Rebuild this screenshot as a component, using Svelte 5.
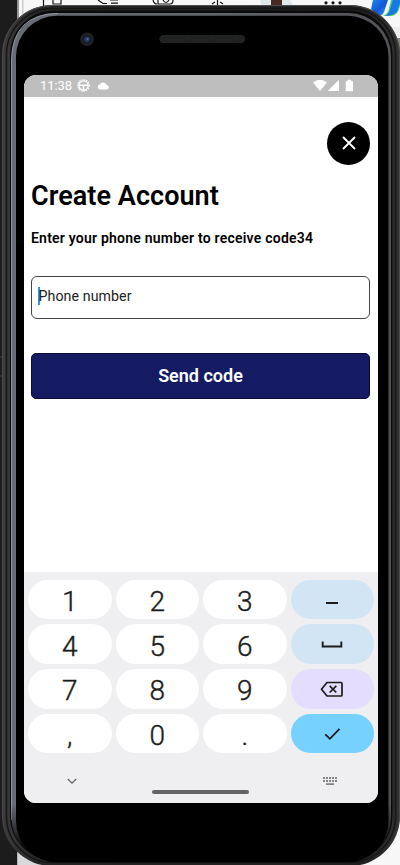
<script>
  const keys = [
    '1', '2', '3', 'dash',
    '4', '5', '6', 'space',
    '7', '8', '9', 'delete',
    ',', '0', '.', 'done'
  ];
  const actions = ['dash', 'space', 'delete', 'done'];
</script>

<div class="stage">
  <svg class="device" width="400" height="865" viewBox="0 0 400 865" aria-hidden="true">
    <defs>
      <linearGradient id="rim" gradientUnits="userSpaceOnUse" x1="0" x2="400" y1="0" y2="0">
        <stop offset="0" stop-color="#3e3c3d" /><stop offset=".1" stop-color="#252525" />
        <stop offset=".9" stop-color="#1f1f1f" /><stop offset="1" stop-color="#32312f" />
      </linearGradient>
      <linearGradient id="edge" gradientUnits="userSpaceOnUse" x1="0" x2="400" y1="0" y2="0">
        <stop offset="0" stop-color="#686c75" /><stop offset=".5" stop-color="#63666a" /><stop offset="1" stop-color="#505055" />
      </linearGradient>
      <linearGradient id="logo" x1="0" x2="1" y1="0" y2="1">
        <stop offset="0" stop-color="#1689e8" /><stop offset=".55" stop-color="#1556d8" /><stop offset="1" stop-color="#27b5ed" />
      </linearGradient>
      <linearGradient id="logo2" x1="0" x2="0" y1="0" y2="1">
        <stop offset="0" stop-color="#35c6bd" /><stop offset="1" stop-color="#62dc56" />
      </linearGradient>
      <linearGradient id="fade" gradientUnits="userSpaceOnUse" x1="0" x2="0" y1="0" y2="865">
        <stop offset="0" stop-color="#fff" /><stop offset=".93" stop-color="#fff" /><stop offset=".98" stop-color="#000" />
      </linearGradient>
      <mask id="edgeMask" maskUnits="userSpaceOnUse" x="0" y="0" width="400" height="865"><rect width="400" height="865" fill="url(#fade)" /></mask>
      <pattern id="mesh" width="3" height="3" patternUnits="userSpaceOnUse">
        <rect width="3" height="3" fill="#1e1f1f" /><rect width="1" height="1" fill="#2b2d2d" /><rect x="1.5" y="1.5" width="1" height="1" fill="#292b2b" />
      </pattern>
    </defs>
    <rect width="400" height="865" fill="#f7f7f7" />
    <rect y="27" x="380" width="20" height="11" fill="#ededed" />
    <rect y="38" x="380" width="20" height="30" fill="#858585" />
    <rect width="17.5" height="865" fill="#1c1c1c" />
    <rect x="17.5" width="1.5" height="40" fill="#999" />
    <rect x="22" width="1.5" height="30" fill="#ccc" />
    <path d="M0 357h3M0 376h3" stroke="#444" />
    <rect x="17.5" y="840" width="40" height="25" fill="#d9d9dc" />
    <g stroke="#111" fill="none" stroke-width="1.2">
      <path d="M43.500 0v8M53 0v4h8V0M98 0l5 3.500h4M110 0h8M111 3.200h7M153 0q1 4 4 4M158 0v4h12q3 0 3-4M163 0q3 5 6 0M217.500 0v7M212 4l3-2M223 4l-3-2" />
    </g>
    <path d="M260 0h30l4 6h-32z" fill="#dfe8eb" /><path d="M271 0h11v6h-11z" fill="#4a2923" />
    <g fill="#111"><circle cx="326" cy="2.800" r="1.600" /><circle cx="333" cy="2.800" r="1.600" /><circle cx="340" cy="2.800" r="1.600" /></g>
    <path d="M373 0h15l-4 12q-2 5-7 3l-6-6z" fill="url(#logo)" />
    <path d="M391 0h9v6q-2 9-8 10h-9q5-2 6-8z" fill="url(#logo2)" /><path d="M393 0h7v3l-3 9q-4 4-12 4 4-2 5-7z" fill="#1878e4" />

    <rect x="2" y="5" width="398" height="861" rx="50" fill="url(#rim)" />
    <rect x="2.500" y="5.500" width="397" height="860" rx="49.500" fill="none" stroke="#4d4d4f" stroke-width="1" mask="url(#edgeMask)" />
    <rect x="6.500" y="8.500" width="389" height="854" rx="46" fill="none" stroke="#161616" stroke-width="1.500" />
    <rect x="10" y="10.500" width="382.500" height="850" rx="44" fill="#0a0a0a" />
    <g mask="url(#edgeMask)">
      <rect x="11.500" y="13" width="379.500" height="848" rx="43" fill="url(#edge)" />
      <path d="M11.500 820V59Q13 14 58 13.500" fill="none" stroke="#92979d" stroke-width="1" />
    </g>
    <rect x="16" y="15.800" width="372.500" height="846.500" rx="41" fill="#000" />
    <circle cx="87" cy="39.300" r="6.800" fill="#202124" />
    <circle cx="87" cy="39.300" r="4.200" fill="#151827" />
    <circle cx="87" cy="39.300" r="2.900" fill="#263764" />
    <circle cx="87.500" cy="39" r="1.200" fill="#4c639b" />
    <rect x="159.500" y="35" width="85.500" height="8" rx="4" fill="url(#mesh)" />
  </svg>

  <main class="screen">
    <header>
      <span class="time">11:38</span>
      <svg class="wheel" width="13" height="13" viewBox="0 0 13 13">
        <circle cx="6.500" cy="6.500" r="5.700" fill="none" stroke="#fff" stroke-width="1.200" stroke-dasharray="1.500 .9" />
        <circle cx="6.500" cy="6.500" r="4.600" fill="none" stroke="#fff" stroke-width="1.200" />
        <path d="M2 6.200h9M6.500 6.200v5" stroke="#fff" stroke-width="1.400" />
      </svg>
      <svg width="13" height="8" viewBox="0 0 13 8"><path d="M3 7.600a2.700 2.700 0 0 1-.1-5.300A3.800 3.800 0 0 1 9.700 3a2.350 2.350 0 0 1 .5 4.600z" fill="#fff" /></svg>
      <svg class="signals" width="42" height="13" viewBox="0 0 42 13" fill="#fff">
        <path d="M0 3.400Q7-2 14 3.400L7 12z" /><path d="M14.800 12L26 .8V12z" />
        <path d="M32.700 2.200h2V.8h3.400v1.400h1.900v10h-7.300z" />
      </svg>
    </header>

    <section class="content">
      <button class="close" aria-label="Close">
        <svg width="14" height="14" viewBox="0 0 14 14"><path d="M1.500 1.500l11 11M12.500 1.500l-11 11" stroke="#fff" stroke-width="1.900" stroke-linecap="round" /></svg>
      </button>
      <h1>Create Account</h1>
      <p>Enter your phone number to receive code34</p>
      <div class="field"><span class="caret"></span><span>Phone number</span></div>
      <button class="send">Send code</button>
    </section>

    <section class="keyboard">
      <div class="keys">
        {#each keys as key}
          <button class={['key', actions.includes(key) && key]} aria-label={key}>
            {#if key === 'dash'}
              <svg width="14" height="6" viewBox="0 0 14 6"><path d="M1 3h12" stroke="#1c1c1c" stroke-width="2" /></svg>
            {:else if key === 'space'}
              <svg width="22" height="8" viewBox="0 0 22 8"><path d="M1.700 1.500v5h18.600v-5" fill="none" stroke="#1c1c1c" stroke-width="1.900" /></svg>
            {:else if key === 'delete'}
              <svg width="24" height="18" viewBox="0 0 24 18" fill="none" stroke="#1c1c1c" stroke-width="1.700"><path d="M7 2.500h14q1 0 1 1v11.500q0 1-1 1H7L1.500 9.200z" stroke-linejoin="round" /><path d="M9.700 5.900l6.600 6.600M16.300 5.900l-6.600 6.600" /></svg>
            {:else if key === 'done'}
              <svg width="17" height="14" viewBox="0 0 17 14"><path d="M1.300 7.300l4.600 4.500L15.500 1.800" fill="none" stroke="#1c1c1c" stroke-width="1.800" /></svg>
            {:else}
              <span>{key}</span>
            {/if}
          </button>
        {/each}
      </div>
      <footer>
        <svg class="down" width="10" height="7" viewBox="0 0 10 7"><path d="M.8 1l4.200 4.200L9.200 1" fill="none" stroke="#656569" stroke-width="1.300" /></svg>
        <span class="home"></span>
        <svg class="board" width="14" height="9" viewBox="0 0 14 9" fill="#858588">
          {#each [0, 3, 6, 9, 12] as x}
            <rect {x} y="0" width="2" height="2" /><rect {x} y="3" width="2" height="2" />
          {/each}
          <rect x="3" y="6.200" width="8" height="1.800" />
        </svg>
      </footer>
    </section>
  </main>
</div>

<style>
  .stage {
    position: relative;
    width: 400px;
    height: 865px;
    box-sizing: border-box;
    padding: 75px 22px 62px 24px;
    overflow: hidden;
    font-family: Roboto, sans-serif;
    color: #000;
  }
  .device { position: absolute; inset: 0; }
  .screen {
    position: relative;
    display: flex;
    flex-direction: column;
    height: 728px;
    background: #fff;
    border-radius: 12px;
    overflow: hidden;
  }
  header {
    display: flex;
    align-items: center;
    height: 21.500px;
    flex: none;
    box-sizing: border-box;
    padding: 0 23px 0 16px;
    background: #bebebe;
    color: #fff;
  }
  .time { width: 36px; font-size: 13px; letter-spacing: -.1px; }
  .wheel { margin: 0 7px 0 1px; }
  .signals { margin-left: auto; }
  button { border: 0; margin: 0; padding: 0; font-family: inherit; }
  .content { display: flex; flex-direction: column; padding: 25px 8px 0 7px; flex: 1; }
  .close {
    width: 43.500px;
    height: 43.500px;
    border-radius: 50%;
    background: #000;
    align-self: flex-end;
    display: flex;
    align-items: center;
    justify-content: center;
    padding-left: 1px;
  }
  h1 { margin: 15px 0 0; font-size: 27px; line-height: 32px; letter-spacing: .05px; font-weight: 600; white-space: nowrap; }
  p { margin: 17px 0 0; font-size: 14px; line-height: 18px; letter-spacing: .22px; font-weight: 600; white-space: nowrap; }
  .field {
    display: flex;
    align-items: center;
    height: 43px;
    box-sizing: border-box;
    margin-top: 29px;
    padding-left: 6px;
    border: 1px solid #444;
    border-radius: 6px;
    font-size: 14.200px;
    letter-spacing: .08px;
    color: #222;
    padding-bottom: 3px;
  }
  .caret { width: 2px; height: 18px; margin-right: -1.500px; background: #2e91ec; }
  .send {
    height: 45.500px;
    margin-top: 34px;
    border: 1px solid #080c2e;
    border-radius: 5px;
    background: #151b62;
    color: #fff;
    font-size: 18px;
    font-weight: 600;
  }
  .keyboard { height: 231px; box-sizing: border-box; background: #efeff1; padding: 7.500px 4px 0; flex: none; }
  .keys { display: grid; grid-template-columns: repeat(4, 83.500px); column-gap: 4px; row-gap: 5.300px; }
  .key {
    height: 39.500px;
    border-radius: 20px;
    background: #fff;
    color: #1c1c1c;
    font-size: 28px;
    font-weight: 300;
    -webkit-text-stroke: .4px #1c1c1c;
    line-height: 39px;
    display: flex;
    align-items: center;
    justify-content: center;
  }
  .key span { padding-top: 4px; }
  .dash, .space { background: #d2e5f4; }
  .delete { background: #e4ddfd; }
  .done { background: #77d1ff; }
  .dash svg { margin-top: 7px; }
  footer { display: flex; align-items: flex-start; padding: 22.500px 37px 0 38.500px; justify-content: space-between; }
  .down { margin-top: 2px; }
  .home { width: 97px; height: 3.500px; margin: 14.500px 0 0 1px; border-radius: 2px; background: #646467; }
  .board { margin-top: 1px; }
</style>
